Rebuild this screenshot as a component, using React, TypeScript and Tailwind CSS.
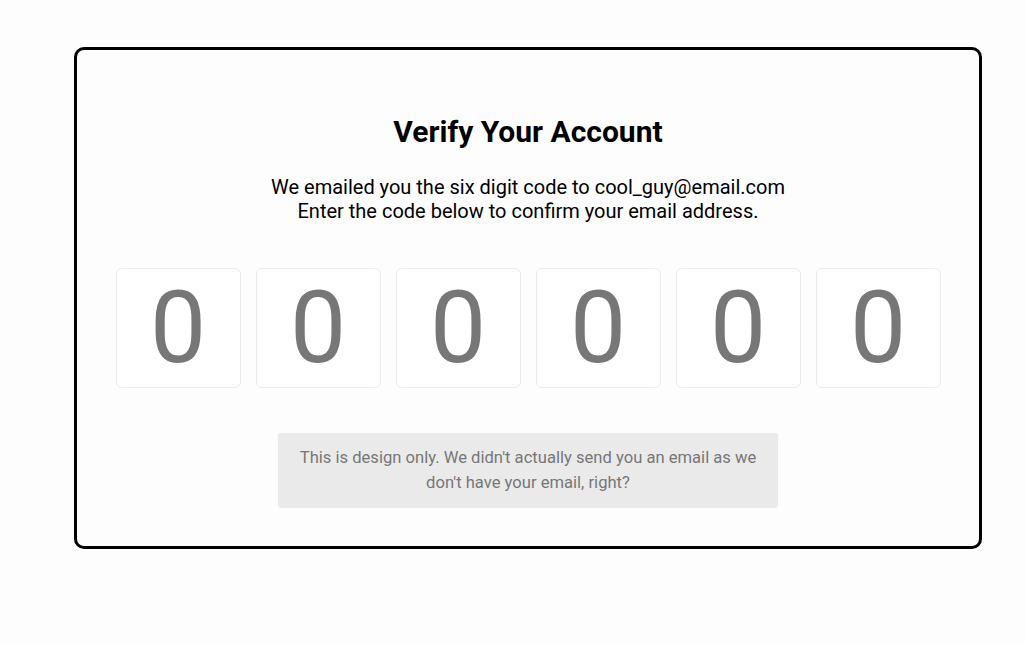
export default function App() {
  const digits = ["0", "0", "0", "0", "0", "0"];

  return (
    <div className="min-h-screen w-full bg-[#fdfdfd] pt-[47px] pl-[74px]" style={{ fontFamily: "Roboto, 'Liberation Sans', sans-serif" }}>
      {/* Card */}
      <div className="w-[908px] h-[502px] border-[3px] border-black rounded-[10px] flex flex-col items-center pt-[63px]">
        <h1 className="text-[30px] leading-[38px] font-bold text-black">Verify Your Account</h1>

        <p className="mt-[24px] text-[20px] leading-[24px] text-black text-center">
          We emailed you the six digit code to cool_guy@email.com
          <br />
          Enter the code below to confirm your email address.
        </p>

        {/* Code inputs */}
        <div className="mt-[45px] flex gap-[15px]">
          {digits.map((d, i) => (
            <div
              key={i}
              className="w-[125px] h-[120px] bg-white border border-[#ebebeb] rounded-[6px] flex items-center justify-center text-[100px] leading-none text-[#777777]"
            >
              {d}
            </div>
          ))}
        </div>

        {/* Note */}
        <div className="mt-[45px] w-[500px] bg-[#eaeaea] rounded-[3px] px-3 py-[13px] text-center text-[16.6px] leading-[24.5px] text-[#777777]">
          This is design only. We didn't actually send you an email as we don't have your email, right?
        </div>
      </div>
    </div>
  );
}
